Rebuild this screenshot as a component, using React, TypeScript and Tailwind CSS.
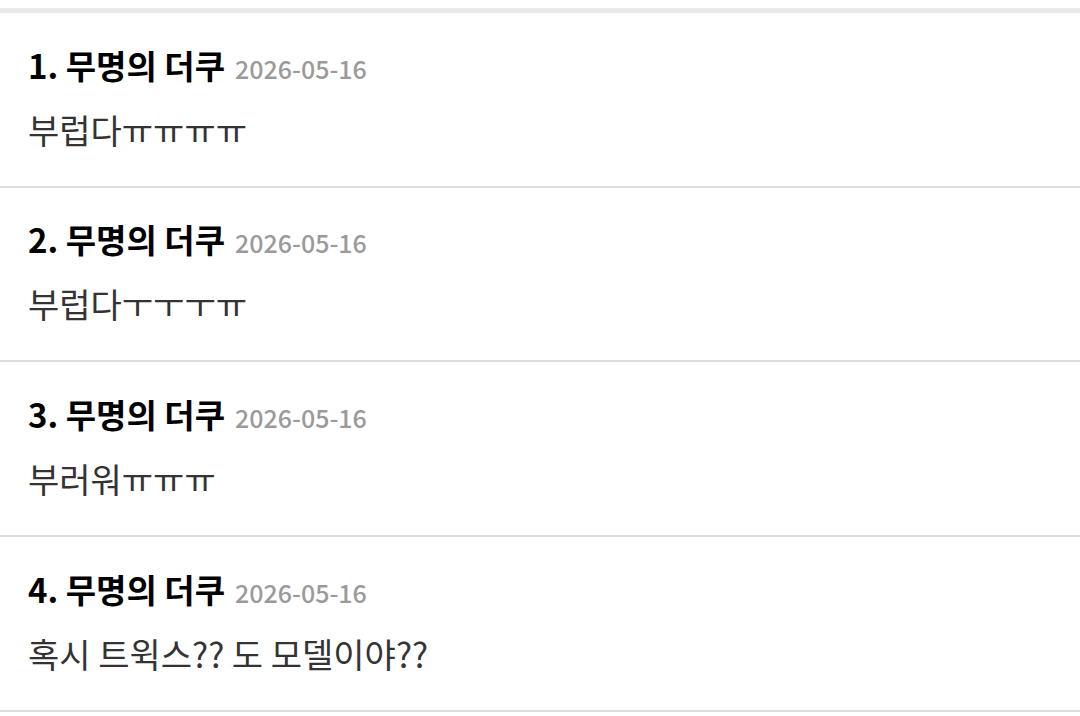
const comments = [
  { no: 1, text: "부럽다ㅠㅠㅠㅠ" },
  { no: 2, text: "부럽다ㅜㅜㅜㅠ" },
  { no: 3, text: "부러워ㅠㅠㅠ" },
  { no: 4, text: "혹시 트윅스?? 도 모델이야??" },
];

function App() {
  return (
    <div
      className="min-h-screen bg-white pt-2"
      style={{ fontFamily: '"Noto Sans CJK KR", "Noto Sans", sans-serif' }}
    >
      <div className="h-[5px] bg-[#e9e9e9]" />
      <ul>
        {comments.map((c) => (
          <li
            key={c.no}
            className="border-b-2 border-[#dddddd] pl-7 pr-7 pt-[29.5px] pb-[34.2px]"
          >
            <div className="flex items-baseline gap-[10px] leading-[44px]">
              <span className="text-[33px] font-bold text-black">
                {c.no}. 무명의 더쿠
              </span>
              <span className="text-[25px] font-medium text-[#9a9a9a]">
                2026-05-16
              </span>
            </div>
            <p className="mt-[18px] text-[34px] leading-[44px] text-[#333333]">
              {c.text}
            </p>
          </li>
        ))}
      </ul>
    </div>
  );
}

export default App;
